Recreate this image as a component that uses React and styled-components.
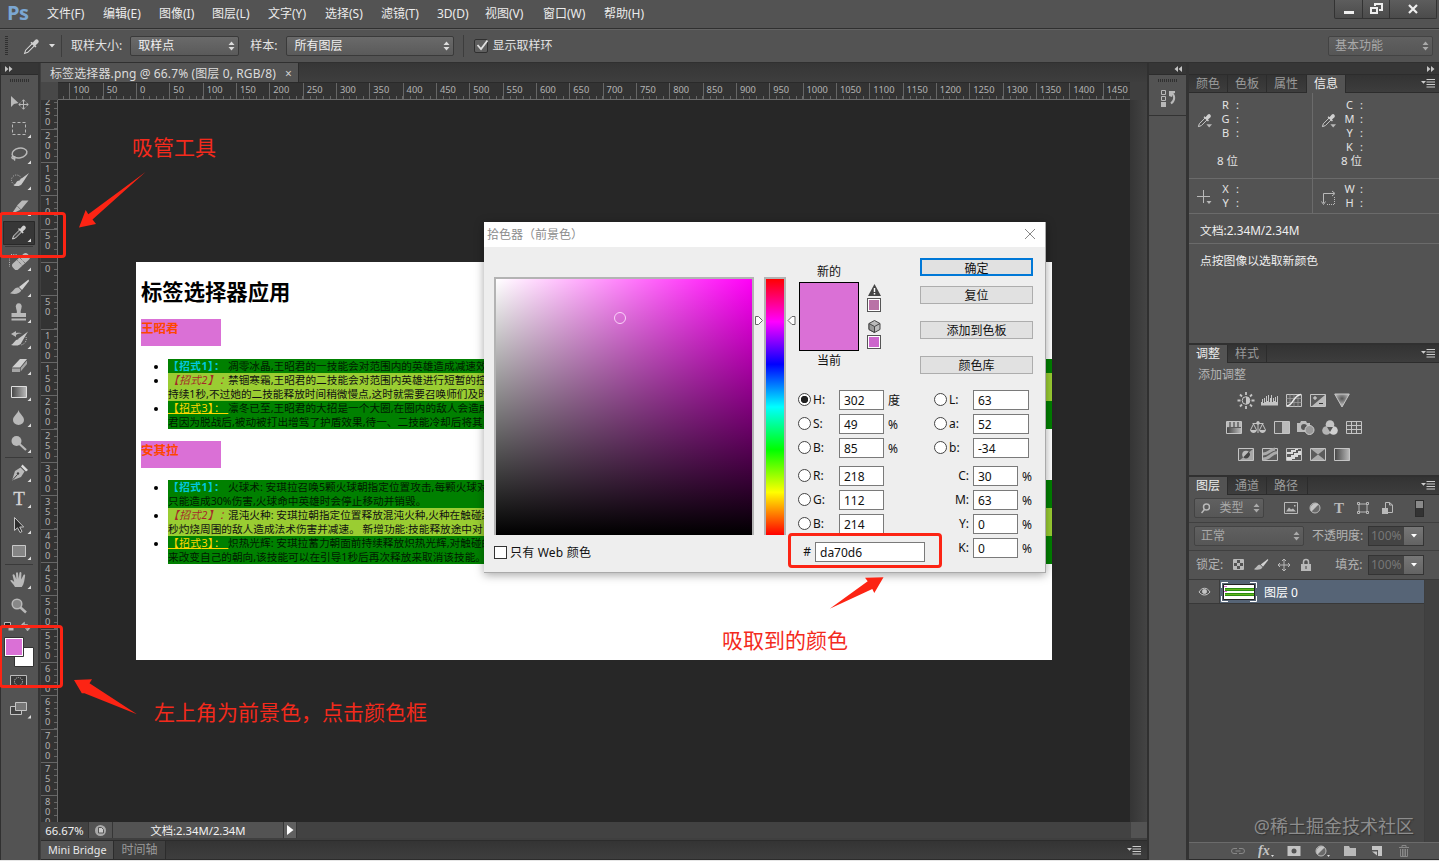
import React from "react";
import styled, { createGlobalStyle, css } from "styled-components";

const ui = `"Noto Sans", "Open Sans", "Noto Sans CJK SC", sans-serif`;
const icon = "#b9b9b9";

const GlobalStyle = createGlobalStyle`
  * { box-sizing: border-box; }
  body {
    margin: 0;
    background: #535353;
    overflow: hidden;
  }
  svg { display: block; flex: none; }
`;

const Window = styled.div`
  position: relative;
  display: flex;
  flex-direction: column;
  width: 1439px;
  height: 861px;
  overflow: hidden;
  background: #535353;
  border-bottom: 1px solid #e6e6e6;
  font-family: ${ui};
  font-size: 12px;
  color: #e3e3e3;
  white-space: nowrap;
`;

/* ---------- top bars ---------- */

const MenuBar = styled.header`
  display: flex;
  height: 29px;
  padding-left: 7px;
  border-bottom: 1px solid #303030;
`;

const Logo = styled.div`
  width: 40px;
  font: bold 20px/26px "Open Sans", sans-serif;
  letter-spacing: -0.5px;
  color: #7ba7d2;
`;

const MenuItem = styled.div`
  width: ${(p) => p.$w}px;
  line-height: 27px;
  color: #ececec;
`;

const WindowButtons = styled.div`
  display: flex;
  width: 103px;
  height: 19px;
  margin-left: auto;
  margin-right: 2px;
  border: 1px solid #333;
  border-top: 0;
  border-radius: 0 0 2px 2px;
  background: linear-gradient(#5d5d5d, #4b4b4b);
`;

const WindowButton = styled.div`
  display: flex;
  align-items: center;
  justify-content: center;
  width: ${(p) => p.$w}px;
  border-right: ${(p) => (p.$last ? 0 : "1px solid #333")};
`;

const OptionsBar = styled.div`
  display: flex;
  align-items: center;
  height: 34px;
  padding: 0 6px 0 5px;
  border-top: 1px solid #646464;
  border-bottom: 1px solid #303030;
`;

const Grip = styled.div`
  width: ${(p) => (p.$vertical ? 3 : 20)}px;
  height: ${(p) => (p.$vertical ? 20 : 3)}px;
  background: ${(p) =>
    p.$vertical
      ? "repeating-linear-gradient(#303030 0 1px, transparent 1px 2px)"
      : "repeating-linear-gradient(90deg, #303030 0 1px, transparent 1px 2px)"};
`;

const Rule = styled.div`
  width: 1px;
  height: 22px;
  background: #3d3d3d;
`;

const OptionLabel = styled.span`
  margin: 0 ${(p) => p.$right || 0}px 0 ${(p) => p.$left || 0}px;
  line-height: 18px;
`;

const Select = styled.div`
  display: flex;
  align-items: center;
  justify-content: space-between;
  width: ${(p) => p.$w}px;
  height: 20px;
  margin: ${(p) => p.$margin || 0};
  padding: 0 3px 1px 7px;
  border: 1px solid #3a3a3a;
  border-radius: 2px;
  background: linear-gradient(#6a6a6a, #5a5a5a);
  color: #f0f0f0;
  line-height: 16px;
  ${(p) =>
    p.$dim &&
    css`
      padding-left: 6px;
      border-color: #434343;
      background: linear-gradient(#606060, #565656);
      color: #a9a9a9;
    `}
`;

const CheckSquare = styled.div`
  width: 14px;
  height: 14px;
  border: 1px solid #303030;
  border-radius: 2px;
  background: #5f5f5f;
`;

/* ---------- main area ---------- */

const Main = styled.main`
  display: flex;
  flex: 1;
  min-height: 0;
`;

const ToolColumn = styled.aside`
  width: 40px;
  border-left: 1px solid #303030;
  border-right: 2px solid #343434;
`;

const CollapseBar = styled.div`
  display: flex;
  align-items: center;
  justify-content: ${(p) => p.$align || "flex-end"};
  height: 12px;
  padding: 0 4px;
  background: #363636;
  border-bottom: 1px solid #2c2c2c;
`;

const ToolGrip = styled.div`
  display: flex;
  justify-content: center;
  height: 15px;
  padding-top: 4px;
`;

const ToolSlot = styled.div`
  height: 26px;
`;

const ToolRule = styled.div`
  height: 3px;
  margin: 0 5px 0 4px;
  border-top: 1px solid #3a3a3a;
`;

const Workspace = styled.section`
  display: flex;
  flex-direction: column;
  width: 1109px;
  padding-left: 1px;
  border-right: 2px solid #303030;
  background: #3f3f3f;
`;

const FileTabs = styled.div`
  display: flex;
  height: 19px;
  background: linear-gradient(#363636, #3e3e3e);
`;

const FileTab = styled.div`
  display: flex;
  align-items: center;
  width: 258px;
  padding: 1px 6px 0 9px;
  background: #535353;
  color: #dcdcdc;
  letter-spacing: 0.12px;
  border-right: 1px solid #2c2c2c;

  span:last-child {
    margin-left: auto;
    color: #d0d0d0;
  }
`;

const RulerRow = styled.div`
  display: flex;
  height: 18px;
`;

const RulerCorner = styled.div`
  width: 17px;
  background: #484848;
`;

const HRuler = styled.div`
  display: flex;
  width: 1072px;
  overflow: hidden;
  background: #333;
  border-top: 1px solid #2a2a2a;
  border-bottom: 1px solid #6c6c6c;

  > :first-child {
    margin-left: -22px;
  }
`;

const HMark = styled.div`
  flex: none;
  width: 33.333px;
  padding-left: 3px;
  border-left: 1px solid #666;
  background: repeating-linear-gradient(90deg, transparent 0 5.667px, #666 5.667px 6.667px) left bottom / 100% 3px no-repeat;
  font-size: 9.3px;
  line-height: 14px;
  color: #b4b4b4;
`;

const VRuler = styled.div`
  width: 17px;
  overflow: hidden;
  background: #333;
  border-right: 1px solid #6c6c6c;

  > :first-child {
    margin-top: -4.7px;
  }
`;

const VMark = styled.div`
  height: 33.333px;
  padding: 1px 0 0 4px;
  border-top: 1px solid #666;
  background: repeating-linear-gradient(transparent 0 5.667px, #666 5.667px 6.667px) right top / 3px 100% no-repeat;
  font-size: 9.3px;
  line-height: 10px;
  color: #b4b4b4;

  span {
    display: block;
  }
`;

const CanvasRow = styled.div`
  display: flex;
  height: 722px;
`;

const Canvas = styled.div`
  width: 1072px;
  padding: 162px 0 0 78px;
  background: #272727;
`;

const ScrollTrack = styled.div`
  flex: 1;
  background: linear-gradient(90deg, #353535, #444);
`;

const StatusBar = styled.div`
  display: flex;
  align-items: center;
  height: 16px;
  background: #424242;
  color: #f1f1f1;
`;

const StatusCell = styled.div`
  display: flex;
  align-items: center;
  justify-content: center;
  width: ${(p) => p.$w}px;
  height: 16px;
  background: ${(p) => p.$bg || "#535353"};
  border-right: 1px solid #363636;
  font-size: 11.3px;
`;

const StatusEnd = styled.div`
  width: 16px;
  height: 16px;
  margin-left: auto;
  background: #535353;
`;

const DrawerBar = styled.div`
  display: flex;
  align-items: center;
  height: 20px;
  margin-top: 2px;
  padding-right: 6px;
  border-top: 1px solid #2c2c2c;
  border-bottom: 1px solid #2c2c2c;
  background: linear-gradient(#343434, #3e3e3e);
`;

const DrawerTab = styled.div`
  height: 18px;
  padding: 0 7px;
  line-height: 18px;
  font-size: ${(p) => (p.$active ? 10.8 : 12)}px;
  background: ${(p) => (p.$active ? "#535353" : "#404040")};
  color: ${(p) => (p.$active ? "#e8e8e8" : "#999")};
  border-right: 1px solid #2c2c2c;
`;

const Spacer = styled.div`
  flex: 1;
`;

/* ---------- open document ---------- */

const Page = styled.article`
  width: 916px;
  height: 398px;
  padding: 14px 0 0 5px;
  background: #fff;
  color: #000;
  font-size: 10.667px;
  overflow: hidden;

  h1 {
    margin: 0;
    font-size: 21.333px;
    line-height: 32px;
  }
`;

const HeroName = styled.h3`
  width: 80px;
  height: 27px;
  margin: ${(p) => p.$top}px 0 0;
  background: #da70d6;
  color: #ff4500;
  font-size: 12.48px;
  line-height: 20px;
`;

const SkillList = styled.ul`
  margin: ${(p) => p.$top}px 0 0;
  padding-left: 27px;
`;

const Skill = styled.li`
  background: ${(p) => (p.$light ? "#9acd32" : "#008000")};
  color: ${(p) => (p.$light ? "#111" : "#001c00")};
  line-height: 14px;

  &::marker {
    color: #000;
  }
  div {
    height: 14px;
  }
`;

const Move = styled.span`
  display: inline-block;
  width: 60px;
  height: 14px;
  letter-spacing: 0.5px;
  ${(p) => p.$kind === 1 && "color: #00c8dc; font-weight: bold;"}
  ${(p) => p.$kind === 2 && "color: #a52a2a; font-style: italic;"}
  ${(p) => p.$kind === 3 && "color: #ffd700; text-decoration: underline;"}
`;

/* ---------- panels ---------- */

const IconStrip = styled.aside`
  width: 40px;
  border-right: 3px solid #333;
`;

const StripButton = styled.div`
  display: flex;
  flex-direction: column;
  align-items: center;
  gap: 7px;
  height: 41px;
  padding-top: 4px;
  border-bottom: 1px solid #333;
`;

const Panels = styled.aside`
  display: flex;
  flex-direction: column;
  width: 250px;
`;

const PanelTabs = styled.div`
  display: flex;
  align-items: center;
  height: 18px;
  padding-right: 4px;
  background: linear-gradient(#333, #3d3d3d);
  border-bottom: 1px solid #2c2c2c;
`;

const PanelTab = styled.div`
  width: ${(p) => p.$w || 39}px;
  height: 18px;
  padding-left: 7px;
  border-right: 1px solid #2c2c2c;
  line-height: 18px;
  background: ${(p) => (p.$active ? "#535353" : "transparent")};
  color: ${(p) => (p.$active ? "#eee" : "#9b9b9b")};
`;

const InfoGrid = styled.div`
  display: grid;
  grid-template-columns: 124px 1fr;
  height: ${(p) => p.$h}px;
  border-bottom: 1px solid #6b6b6b;
`;

const InfoCell = styled.div`
  display: flex;
  padding: ${(p) => p.$top}px 0 0 8px;
  border-right: ${(p) => (p.$last ? 0 : "1px solid #6b6b6b")};
`;

const InfoIcon = styled.div`
  width: 23px;
  padding-top: ${(p) => p.$top}px;
`;

const InfoLines = styled.div`
  font-size: 11px;
  line-height: 14px;

  div {
    display: flex;
    height: 14px;
  }
  b {
    width: 11px;
    margin-right: 5px;
    text-align: center;
    font-weight: normal;
  }
  p {
    margin: 0 0 0 -3px;
    font-size: 11.5px;
  }
`;

const InfoNote = styled.div`
  height: ${(p) => p.$h}px;
  padding-left: 11px;
  line-height: 33px;
  border-bottom: ${(p) => (p.$line ? "1px solid #6b6b6b" : 0)};
  color: #f0f0f0;
  font-size: 11.8px;
`;

const PanelGap = styled.div`
  height: 2px;
  background: #303030;
`;

const Adjustments = styled.div`
  height: 112px;
  padding: 3px 0 0 9px;
  line-height: 17px;
  color: #b4b4b4;
`;

const AdjustRow = styled.div`
  display: flex;
  justify-content: center;
  gap: 8px;
  margin: ${(p) => p.$top || 11}px 49px 0 0;
`;

const LayerRow = styled.div`
  display: flex;
  align-items: center;
  height: ${(p) => p.$h}px;
  padding: 0 0 1px 5px;
  border-bottom: 1px solid ${(p) => p.$line || "#404040"};
  color: #b4b4b4;
`;

const IconGroup = styled.div`
  display: flex;
  align-items: center;
  gap: ${(p) => p.$gap}px;
  margin-left: ${(p) => p.$left}px;
`;

const FilterSwitch = styled.div`
  width: 9px;
  height: 17px;
  margin-left: 21px;
  border: 1px solid #2c2c2c;
  background: linear-gradient(#8a8a8a 0 50%, #333 50%);
`;

const Percent = styled.div`
  display: flex;
  width: 56px;
  height: 20px;
  margin-left: auto;
  margin-right: 15px;
  border: 1px solid #343434;
  color: #777;
  line-height: 18px;

  span {
    flex: 1;
    padding-left: 2px;
    background: #444;
  }
  div {
    display: flex;
    align-items: center;
    justify-content: center;
    width: 19px;
    background: linear-gradient(#777, #636363);
  }
`;

const Layers = styled.div`
  display: flex;
  flex: 1;
  background: #474747;
`;

const LayerList = styled.div`
  flex: 1;
  border-right: 1px solid #3e3e3e;
`;

const LayerItem = styled.div`
  display: flex;
  align-items: center;
  height: 24px;
  background: #566476;
  border-bottom: 1px solid #383838;
  color: #fff;
`;

const EyeCell = styled.div`
  display: flex;
  align-items: center;
  justify-content: center;
  width: 31px;
  height: 23px;
  background: #535353;
  border-right: 1px solid #3c3c3c;
`;

const LayerScroll = styled.div`
  width: 14px;
  background: #414141;
`;

const LayerFooter = styled.div`
  display: flex;
  align-items: center;
  justify-content: flex-end;
  gap: 13px;
  height: 18px;
  padding-right: 28px;
  border-top: 1px solid #6b6b6b;
  border-bottom: 1px solid #2c2c2c;
`;

/* ---------- color picker ---------- */

const Dialog = styled.div`
  position: absolute;
  left: 484px;
  top: 222px;
  width: 562px;
  height: 351px;
  background: #eee;
  border-right: 1px solid #aaa;
  border-bottom: 1px solid #aaa;
  box-shadow: 0 2px 9px rgba(0, 0, 0, 0.35);
  color: #111;
`;

const DialogTitle = styled.div`
  display: flex;
  align-items: center;
  justify-content: space-between;
  height: 25px;
  padding: 0 9px 2px 3px;
  background: #fff;
  color: #8d8d8d;
`;

const DialogBody = styled.div`
  display: flex;
  height: 325px;
  padding-left: 10px;
`;

const FieldColumn = styled.div`
  width: 261px;
  padding-top: 30px;
`;

const ColorField = styled.div`
  position: relative;
  width: 260px;
  height: 258px;
  border: 2px solid #b3b3b3;
  border-bottom: 0;
  background: linear-gradient(transparent, #000), linear-gradient(90deg, #fff, #ff00f7);
`;

const FieldCursor = styled.div`
  position: absolute;
  left: 118px;
  top: 33px;
  width: 12px;
  height: 12px;
  border: 1px solid #fbd3fa;
  border-radius: 50%;
`;

const WebOnly = styled.label`
  display: flex;
  align-items: center;
  gap: 3px;
  height: 18px;
  margin-top: 8px;
  letter-spacing: 0.2px;

  i {
    width: 13px;
    height: 13px;
    border: 1px solid #333;
    background: #fff;
  }
`;

const HueColumn = styled.div`
  display: flex;
  align-items: flex-start;
  width: 43px;
  padding-top: 30px;

  svg {
    margin-top: 38px;
  }
`;

const HueBar = styled.div`
  width: 22px;
  height: 258px;
  margin: 0 1px;
  border: 2px solid #b3b3b3;
  border-bottom: 0;
  background: linear-gradient(#f00, #f0f 16.7%, #00f 33.3%, #0ff 50%, #0f0 66.7%, #ff0 83.3%, #f00);
`;

const Values = styled.div`
  width: 237px;
`;

const ValuesTop = styled.div`
  display: flex;
  height: 143px;
`;

const Preview = styled.div`
  width: 61px;
  padding: 16px 0 0 1px;
  line-height: 18px;
  text-align: center;

  div {
    height: 69px;
    margin: 1px 0;
    border: 1px solid #000;
    background: #da70d6;
  }
`;

const Warnings = styled.div`
  display: flex;
  flex-direction: column;
  align-items: center;
  gap: 3px;
  width: 16px;
  margin: 37px 0 0 7px;
`;

const SmallSwatch = styled.div`
  width: 14px;
  height: 14px;
  margin-top: -1px;
  margin-bottom: ${(p) => p.$gap || 0}px;
  border: 1px solid #555;
  background: ${(p) => p.$color};
  box-shadow: inset 0 0 0 1px #fff;
`;

const Buttons = styled.div`
  width: 113px;
  margin-left: 38px;
  padding-top: 11px;
`;

const DialogButton = styled.div`
  height: 18px;
  margin-bottom: ${(p) => p.$gap || 17}px;
  border: ${(p) => (p.$primary ? "2px solid #0078d7" : "1px solid #adadad")};
  background: #e1e1e1;
  line-height: ${(p) => (p.$primary ? 17 : 18)}px;
  text-align: center;
`;

const ValueColumns = styled.div`
  display: flex;
  justify-content: space-between;
`;

const ValueColumn = styled.div`
  width: ${(p) => p.$w}px;
`;

const ValueRow = styled.div`
  display: flex;
  align-items: center;
  height: 20px;
  margin-bottom: ${(p) => (p.$gap ? 8 : 4)}px;
`;

const Radio = styled.i`
  width: 13px;
  height: 13px;
  margin-bottom: 1px;
  border: 1px solid #444;
  border-radius: 50%;
  background: ${(p) => (p.$on ? "radial-gradient(#222 0 3.4px, #fff 4px)" : "#fff")};
`;

const ValueLabel = styled.span`
  flex: none;
  width: ${(p) => p.$w}px;
  padding: ${(p) => (p.$right ? "0 4px 1px 0" : "0 0 1px 2px")};
  text-align: ${(p) => (p.$right ? "right" : "left")};
`;

const ValueInput = styled.div`
  flex: none;
  width: ${(p) => p.$w || 45}px;
  height: 20px;
  margin-right: 4px;
  padding-left: 4px;
  border: 1px solid #7a7a7a;
  background: #fff;
  line-height: 19px;
`;

/* ---------- red markup ---------- */

const Markup = styled.div`
  position: absolute;
  left: ${(p) => p.$x}px;
  top: ${(p) => p.$y}px;
  width: ${(p) => p.$w}px;
  height: ${(p) => p.$h}px;
  border: 3px solid #fc2414;
  border-radius: 4px;
`;

const Note = styled.div`
  position: absolute;
  left: ${(p) => p.$x}px;
  top: ${(p) => p.$y}px;
  font-size: 21px;
  line-height: 30px;
  color: #f32a1c;
`;

const Arrows = styled.svg`
  position: absolute;
  left: 0;
  top: 0;
  fill: #fc2414;
  pointer-events: none;
`;

const Watermark = styled.div`
  position: absolute;
  right: 25px;
  bottom: 21px;
  font-size: 18px;
  line-height: 26px;
  color: #8d8d8d;
  text-shadow: 1px 1px 1px #333;
`;

/* ---------- icons ---------- */

const UpDown = ({ color = "#ddd" }) => (
  <svg width="7" height="10" viewBox="0 0 7 10" fill={color}>
    <path d="M0.5 4 3.5 0.5 6.5 4zM0.5 6 3.5 9.5 6.5 6z" />
  </svg>
);

const Chevrons = ({ left }) => (
  <svg width="8" height="6" viewBox="0 0 8 6" fill="#c4c4c4">
    <path d={left ? "M4 0v6L0.5 3zM8 0v6L4.5 3z" : "M0 0v6l3.5-3zM4 0v6l3.5-3z"} />
  </svg>
);

const PanelMenu = () => (
  <svg width="14" height="9" viewBox="0 0 14 9">
    <path d="M0 2h5L2.5 4.8z" fill="#ccc" />
    <path d="M5.5 .5h8.5M5.5 3h8.5M5.5 5.500h8.500M5.500 8h8.500" stroke="#ccc" />
  </svg>
);

const dropperShape = (
  <>
    <path d="M1.5 14.5 2.5 11.5 9 5l2 2-6.5 6.5z" fill="#4a4a4a" stroke="#d5d5d5" />
    <path d="M7 4.5 8 3.5l1 .9L11.6 1.6a2 2 0 0 1 2.8 2.8L11.7 7l1 1-1 1z" fill="#d0d0d0" />
  </>
);

const Dropper = ({ size = 16, menu }) => (
  <svg width={size} height={size} viewBox="0 0 16 16">
    {dropperShape}
    {menu && <path d="M10 12h6l-3 3.4z" fill={icon} />}
  </svg>
);

const brushShape = (
  <>
    <path d="M28.5 4.5 19 12l3 3L29 6z" fill="#d2d2d2" />
    <path d="M18.5 12.5c-3.5-.7-4 2.5-8.5 5.7 4 1.4 9.5 1 11.3-2.6z" fill={icon} />
  </>
);

const tools = {
  move: (
    <>
      <path d="M11 6v11l3-3 4.5-1z" fill={icon} />
      <path d="M23.5 10v9M19 14.5h9M22 11.5l1.5-1.8 1.5 1.8M22 17.5l1.5 1.8 1.5-1.8M20.5 13l-1.8 1.5 1.8 1.5M26.5 13l1.8 1.5-1.8 1.5" fill="none" stroke={icon} />
    </>
  ),
  marquee: <path d="M12.5 6.5h13v12h-13z" fill="none" stroke={icon} strokeDasharray="3 2" />,
  lasso: (
    <g fill="none" stroke={icon} strokeWidth="1.5">
      <ellipse cx="19.5" cy="11" rx="7.5" ry="4.8" transform="rotate(-12 19.5 11)" />
      <path d="M13 14c-3 2 1 3.5 2 2s-3-2.500 0 2.500" />
    </g>
  ),
  quick: (
    <>
      <circle cx="16.5" cy="12" r="5" fill="none" stroke={icon} strokeDasharray="1 1.4" />
      <path d="M29 5 19.5 12l3 3zM20 12.500c-3.500-.500-3.500 3-6.500 5 3.500 1 8 .8 9-2.800z" fill="#c8c8c8" />
    </>
  ),
  slice: <path d="M28.5 6.500h-6.500l-5 5 4 4zM17 12l-5.500 8 9-4.300z" fill={icon} />,
  dropper: (
    <>
      <path d="M3.5 1.5h31v23h-31z" fill="#373737" stroke="#292929" />
      <g transform="translate(11 4.5)">{dropperShape}</g>
    </>
  ),
  heal: (
    <>
      <path d="M9.5 6v12M11 5.5h6" fill="none" stroke={icon} strokeDasharray="1 1.3" />
      <rect x="11" y="8.5" width="20" height="8" rx="3" transform="rotate(-42 21 12.5)" fill={icon} />
      <path d="m17.5 11.500 4.800 5M20 9l5 5" stroke="#606060" strokeDasharray="1 1" />
    </>
  ),
  brush: brushShape,
  stamp: (
    <path d="M16 6.5a3 3 0 1 1 5.5 0c0 1.7-1.2 3-.8 5.5H26v4H11.5v-4h5.3c.5-2.5-.8-4-.8-5.5zM11.5 17.5H26v2H11.5z" fill={icon} />
  ),
  history: (
    <>
      <path d="m11 7 5-3v2c3-.4 5 0 6 .6-2-.2-4 .1-6 1.4v2z" fill={icon} />
      <path d="M28 4.5 18 12l3.500 3.500zM18.500 12.500c-3.500-.500-3.500 3-7.500 5.500 5 1.200 9.500.7 10.500-2.500z" fill="#c8c8c8" />
      <path d="M26 10c1 3-.5 7-5 8" fill="none" stroke={icon} strokeDasharray="1 1" />
    </>
  ),
  eraser: (
    <>
      <path d="m12 14.5 8-8.5h7l-7 8.5z" fill="#d0d0d0" />
      <path d="M12 15.5h8V19h-8zM20.7 15 27 7.5V11l-6.3 7.5z" fill="#a5a5a5" />
    </>
  ),
  gradient: <path d="M11.5 7.5h15v11h-15z" fill="url(#toolGrad)" stroke="#ddd" />,
  blur: <path d="M18.5 5c1 4 5.5 6 5.5 10a5.5 5 0 0 1-11 0c0-4 4.7-6 5.5-10z" fill={icon} />,
  dodge: (
    <>
      <circle cx="16.5" cy="10" r="5" fill={icon} />
      <path d="m19.5 13 6.5 6" stroke={icon} strokeWidth="2.2" />
    </>
  ),
  pen: (
    <>
      <path d="M12 20.5 15 11l5.5-3.5 4 4L21 17z" fill={icon} />
      <path d="m21 6.5 1.5-2 5.5 5.5-2 1.5z" fill="#ddd" />
      <path d="m12.5 20 5-5.5" stroke="#444" />
      <circle cx="18" cy="13.5" r="1.2" fill="#444" />
    </>
  ),
  type: (
    <text x="19" y="19" textAnchor="middle" fontFamily="Liberation Serif, serif" fontSize="19" fill="#d6d6d6" stroke="#d6d6d6" strokeWidth=".3">T</text>
  ),
  path: <path d="M14.5 5.5v13l3-2.7 2.5 4.7 2-1-2.3-4.5h4z" fill="#2c2c2c" stroke="#c4c4c4" />,
  rect: <path d="M12.5 7.5h13v11h-13z" fill="#858585" stroke="#c8c8c8" />,
  hand: (
    <path d="M15 20c-1.5-3-3.5-4.5-4.8-6.5.8-1.2 2.3-.5 4 1.5L12.5 8c.7-1.4 1.8-.8 2.2.2l1.6 4L16 6c.7-1.2 1.8-1 2 .2l.7 5.5.8-6.2c.7-1 1.8-.7 1.9.5l-.2 6.5L23.5 8c.9-.8 1.8-.3 1.6.8-.6 3.5-.8 8.2-3.3 11.2z" fill={icon} />
  ),
  zoom: (
    <>
      <circle cx="17" cy="11" r="4.8" fill="#888" stroke={icon} strokeWidth="1.5" />
      <path d="m20.5 14.5 5.500 5" stroke={icon} strokeWidth="2.5" />
    </>
  ),
};

const toolOrder = [
  "move", "marquee", "lasso", "quick", "slice", "dropper", "-", "heal", "brush", "stamp",
  "history", "eraser", "gradient", "blur", "dodge", "-", "pen", "type", "path", "rect", "-", "hand", "zoom",
];

// viewBox starts at 1 because the toolbar has a one pixel left border
const Tool = ({ name }) => (
  <ToolSlot>
    <svg width="37" height="26" viewBox="1 0 37 26">
      {tools[name]}
      {name !== "move" && name !== "zoom" && <path d="M31 18.5V22h-3.5z" fill="#ddd" />}
    </svg>
  </ToolSlot>
);

const ToolColors = () => (
  <svg width="37" height="108" viewBox="1 619 37 108">
    <path d="M4.5 622.5h6v5h-6z" fill="#222" stroke={icon} />
    <path d="M8.5 626.5h5v4h-5z" fill={icon} />
    <path d="M23 624.5h4.500v5M24.500 622l-3 2.500 3 2.500zM25 627.500l2.500 3.500 3-3.500z" fill={icon} stroke={icon} strokeWidth=".5" />
    <path d="M14.5 647.5h19v19h-19z" fill="#fff" stroke="#333" />
    <path d="M4.5 637.5h19v19h-19z" fill="#fff" stroke="#333" />
    <path d="M6 639h16v16H6z" fill="#da70d6" />
    <path d="M10.5 675.5h16v12h-16z" fill="#383838" stroke="#bbb" />
    <circle cx="18.5" cy="681.5" r="4" fill="none" stroke="#ccc" strokeDasharray="1 1" />
    <path d="M10.5 706.5h11v8h-11z" fill="#444" stroke="#c4c4c4" />
    <path d="M15.5 702.5h11v8h-11z" fill="#777" stroke="#c4c4c4" />
    <path d="M31 715v3.5h-3.5z" fill="#ddd" />
  </svg>
);

const box = <path d="M.5 1.5h15v12H.5z" fill="#5b5b5b" stroke="#c4c4c4" />;

const adjustIcons = {
  sun: (
    <>
      <circle cx="8" cy="7.5" r="3.8" fill="#555" stroke="#c4c4c4" />
      <path d="M8 3.7a3.8 3.8 0 0 1 0 7.600z" fill="#c4c4c4" />
      <path d="M8-1v3M8 13v3M-.5 7.500h3M13.500 7.500h3M2 1.500l2 2M12 11.500l2 2M14 1.500l-2 2M2 13.500l2-2" stroke="#c4c4c4" strokeWidth="1.8" />
    </>
  ),
  levels: (
    <path d="M-1 12.5V9h1V6h1v4h1V5h1v4h1V3h1v5h1V2h1v7h1V5h1V2h1v7h1V5h1v3h1V4h1v5h1V3h1v9.5z" fill="#c4c4c4" />
  ),
  curves: (
    <>
      {box}
      <path d="M4 1.5v12M8 1.5v12M12 1.5v12M.5 5.5h15M.5 9.5h15" stroke="#999" strokeWidth=".8" />
      <path d="M1 13c7-1 6-11 14-11.5" fill="none" stroke="#eee" strokeWidth="1.4" />
    </>
  ),
  exposure: (
    <>
      {box}
      <path d="M15 2v11H2z" fill="#bbb" />
      <path d="M3 5h4M5 3v4" stroke="#ddd" />
      <path d="M9 10.5h4" stroke="#333" />
    </>
  ),
  vibrance: <path d="M.7 1h14.600L8 14z" fill="url(#vibrance)" stroke="#c4c4c4" />,
  hue: (
    <>
      {box}
      <path d="M1 2h14v5H1z" fill="#bbb" />
      <path d="M4 2v5M8 2v5M12 2v5" stroke="#777" strokeWidth="2" />
      <path d="M1 8h14v5H1z" fill="url(#toolGrad)" />
    </>
  ),
  balance: (
    <>
      <path d="M8 1v12M2.500 3.500h11M3.500 4 .5 10M3.500 4l3 6M12.500 4l-3 6M12.500 4l3 6" fill="none" stroke="#c4c4c4" />
      <path d="M0 10h7c-1 4-6 4-7 0zM9 10h7c-1 4-6 4-7 0z" fill="#c4c4c4" />
      <circle cx="8" cy="3" r="1.8" fill="#c4c4c4" />
    </>
  ),
  bw: (
    <>
      {box}
      <path d="M8 2h7v11H8z" fill="#bbb" />
    </>
  ),
  photo: (
    <>
      <path d="M-1 3h3l1-2h5l1 2h3v9H-1z" fill="#bbb" />
      <circle cx="6" cy="7" r="3" fill="#555" />
      <circle cx="11.5" cy="10" r="4.5" fill="#999" stroke="#ccc" />
    </>
  ),
  mixer: (
    <>
      <circle cx="8" cy="4.5" r="4.3" fill="#c4c4c4" />
      <circle cx="4.5" cy="10.5" r="4.3" fill="#b4b4b4" />
      <circle cx="11.5" cy="10.5" r="4.3" fill="#d0d0d0" />
      <path d="M5 7h6l-3 5z" fill="#555" />
    </>
  ),
  lookup: (
    <>
      {box}
      <path d="M5.5 1.5v12M10.5 1.5v12M.5 5.5h15M.5 9.5h15" stroke="#c4c4c4" />
    </>
  ),
  invert: (
    <>
      {box}
      <path d="M15 2v11H2z" fill="#a8a8a8" />
      <circle cx="8" cy="7.5" r="3.8" fill="#bbb" />
      <path d="M10.7 4.8a3.8 3.8 0 0 1-5.4 5.4z" fill="#444" />
    </>
  ),
  posterize: (
    <>
      {box}
      <path d="M1 7c6 0 6-4 12-5M1 12c7 0 8-6 14-6.500" fill="none" stroke="#aaa" strokeWidth="3" />
    </>
  ),
  threshold: (
    <>
      {box}
      <path d="M1 13v-3h4V8h3V6h4V4h3v4h-3v2H9v2H6v1zM1 7V5h4V3h4V2h3v1h-2v2H7v2z" fill="#ddd" />
    </>
  ),
  selective: (
    <>
      {box}
      <path d="m1 2 7 5.500L15 2zM1 13l7-5.500 7 5.500z" fill="#aaa" />
    </>
  ),
  map: <path d="M.5 1.5h15v12H.5z" fill="url(#toolGrad)" stroke="#c4c4c4" />,
};

const AdjustIcon = ({ name }) => (
  <svg width="16" height="16" viewBox="0 0 16 16" overflow="visible">
    {adjustIcons[name]}
  </svg>
);

const SmallIcon = ({ w = 14, children }) => (
  <svg width={w} height="14" viewBox={`0 0 ${w} 14`} fill="none" stroke="#b9b9b9">
    {children}
  </svg>
);

const HalfCircle = () => (
  <>
    <circle cx="7" cy="7" r="5" fill="#6a6a6a" />
    <path d="M3.5 10.5 10.5 3.5A5 5 0 0 0 3.5 10.5z" fill="#c4c4c4" stroke="none" />
  </>
);

/* ---------- data ---------- */

const menus = [
  ["文件(F)", 56], ["编辑(E)", 56], ["图像(I)", 53], ["图层(L)", 56], ["文字(Y)", 57],
  ["选择(S)", 56], ["滤镜(T)", 56], ["3D(D)", 48], ["视图(V)", 58], ["窗口(W)", 61], ["帮助(H)", 60],
];

const hMarks = ["", ...Array.from({ length: 32 }, (_, i) => Math.abs(i * 50 - 100))];
const vMarks = Array.from({ length: 22 }, (_, i) => Math.abs(i * 50 - 250));

const heroes = [
  {
    name: "王昭君",
    skills: [
      ["凋零冰晶,王昭君的一技能会对范围内的英雄造成减速效果"],
      ["禁锢寒霜,王昭君的二技能会对范围内英雄进行短暂的控制", "持续1秒,不过她的二技能释放时间稍微慢点,这时就需要召唤师们及时"],
      ["凛冬已至,王昭君的大招是一个大圈,在圈内的敌人会造成", "君因为脱战后,被动被打出增驾了护盾效果,待一、二技能冷却后将其"],
    ],
  },
  {
    name: "安其拉",
    skills: [
      ["火球术: 安琪拉召唤5颗火球朝指定位置攻击,每颗火球对", "只能造成30%伤害,火球命中英雄时会停止移动并销毁。"],
      ["混沌火种: 安琪拉朝指定位置释放混沌火种,火种在触碰敌", "秒灼烧周围的敌人造成法术伤害并减速。 新增功能:技能释放途中对"],
      ["炽热光辉: 安琪拉蓄力朝面前持续释放炽热光辉,对触碰的", "来改变自己的朝向,该技能可以在引导1秒后再次释放来取消该技能。"],
    ],
  },
];

/* ---------- sections ---------- */

const TopBars = () => (
  <>
    <MenuBar>
      <Logo>Ps</Logo>
      {menus.map(([text, w]) => (
        <MenuItem key={text} $w={w}>{text}</MenuItem>
      ))}
      <WindowButtons>
        <WindowButton $w={28}>
          <svg width="12" height="12"><path d="M1 8h10v3H1z" fill="#eee" /></svg>
        </WindowButton>
        <WindowButton $w={27}>
          <svg width="13" height="12" fill="none" stroke="#eee" strokeWidth="2">
            <path d="M5 3V1h7v6H9M1 5h6v5H1z" />
          </svg>
        </WindowButton>
        <WindowButton $w={46} $last>
          <svg width="12" height="10"><path d="m2 1 8 8M10 1 2 9" stroke="#eee" strokeWidth="2.2" /></svg>
        </WindowButton>
      </WindowButtons>
    </MenuBar>
    <OptionsBar>
      <Grip $vertical />
      <OptionLabel $left={15} $right={9}><Dropper size={17} /></OptionLabel>
      <svg width="6" height="4"><path d="M0 0h6L3 3.5z" fill="#ddd" /></svg>
      <OptionLabel $left={6} $right={9}><Rule /></OptionLabel>
      <OptionLabel>取样大小:</OptionLabel>
      <Select $w={109} $margin="0 11px 0 8px">取样点<UpDown /></Select>
      <OptionLabel>样本:</OptionLabel>
      <Select $w={168} $margin="0 9px 0 9px">所有图层<UpDown /></Select>
      <Rule />
      <OptionLabel $left={10} $right={4}>
        <CheckSquare>
          <svg width="14" height="13"><path d="m2.5 5 3.5 4 6.5-8.5" fill="none" stroke="#e0e0e0" strokeWidth="1.8" /></svg>
        </CheckSquare>
      </OptionLabel>
      <OptionLabel>显示取样环</OptionLabel>
      <Spacer />
      <Select $w={105} $dim>基本功能<UpDown color="#aaa" /></Select>
    </OptionsBar>
  </>
);

const Toolbar = () => (
  <ToolColumn>
    <CollapseBar $align="flex-start"><Chevrons /></CollapseBar>
    <ToolGrip><Grip /></ToolGrip>
    {toolOrder.map((name, i) => (name === "-" ? <ToolRule key={i} /> : <Tool key={i} name={name} />))}
    <ToolColors />
  </ToolColumn>
);

const OpenDocument = () => (
  <Page>
    <h1>标签选择器应用</h1>
    {heroes.map((hero, h) => (
      <React.Fragment key={hero.name}>
        <HeroName $top={h ? 12 : 11}>{hero.name}</HeroName>
        <SkillList $top={h ? 12 : 13}>
          {hero.skills.map(([first, second], i) => (
            <Skill key={i} $light={i === 1}>
              <div><Move $kind={i + 1}>【招式{i + 1}】：&nbsp;</Move>{first}</div>
              {second && <div>{second}</div>}
            </Skill>
          ))}
        </SkillList>
      </React.Fragment>
    ))}
  </Page>
);

const Center = () => (
  <Workspace>
    <FileTabs>
      <FileTab><span>标签选择器.png @ 66.7% (图层 0, RGB/8)</span><span>×</span></FileTab>
    </FileTabs>
    <RulerRow>
      <RulerCorner />
      <HRuler>{hMarks.map((n, i) => <HMark key={i}>{n}</HMark>)}</HRuler>
    </RulerRow>
    <CanvasRow>
      <VRuler>
        {vMarks.map((n, i) => (
          <VMark key={i}>{String(n).split("").map((d, j) => <span key={j}>{d}</span>)}</VMark>
        ))}
      </VRuler>
      <Canvas><OpenDocument /></Canvas>
      <ScrollTrack />
    </CanvasRow>
    <StatusBar>
      <StatusCell $w={48} $bg="#424242">66.67%</StatusCell>
      <StatusCell $w={24}>
        <svg width="13" height="13">
          <circle cx="6.5" cy="6.5" r="5.5" fill="#aaa" />
          <path d="M4.500 3.500h3l2 2v3.500h-5z" fill="#ccc" stroke="#555" />
        </svg>
      </StatusCell>
      <StatusCell $w={171}>文档:2.34M/2.34M</StatusCell>
      <StatusCell $w={13} $bg="#606060">
        <svg width="7" height="10"><path d="M0 0v10l6.5-5z" fill="#fff" /></svg>
      </StatusCell>
      <StatusEnd />
    </StatusBar>
    <DrawerBar>
      <DrawerTab $active>Mini Bridge</DrawerTab>
      <DrawerTab>时间轴</DrawerTab>
      <Spacer />
      <PanelMenu />
    </DrawerBar>
  </Workspace>
);

const Channels = ({ names, bits }) => (
  <InfoLines>
    {names.map((n, i) => <div key={i}><b>{n}</b>{n && ":"}</div>)}
    {bits && <p>8 位</p>}
  </InfoLines>
);

const InfoPanel = () => (
  <>
    <PanelTabs>
      <PanelTab>颜色</PanelTab>
      <PanelTab>色板</PanelTab>
      <PanelTab $w={40}>属性</PanelTab>
      <PanelTab $active>信息</PanelTab>
      <Spacer />
      <PanelMenu />
    </PanelTabs>
    <InfoGrid $h={86}>
      <InfoCell $top={5}>
        <InfoIcon $top={15}><Dropper size={15} menu /></InfoIcon>
        <Channels names={["R", "G", "B", ""]} bits />
      </InfoCell>
      <InfoCell $top={5} $last>
        <InfoIcon $top={15}><Dropper size={15} menu /></InfoIcon>
        <Channels names={["C", "M", "Y", "K"]} bits />
      </InfoCell>
    </InfoGrid>
    <InfoGrid $h={35}>
      <InfoCell $top={3}>
        <InfoIcon $top={8}>
          <svg width="15" height="15" stroke={icon}>
            <path d="M6.5 0v13M0 6.5h13" />
            <path d="M9.5 11h5L12 14z" fill={icon} stroke="none" />
          </svg>
        </InfoIcon>
        <Channels names={["X", "Y"]} />
      </InfoCell>
      <InfoCell $top={3} $last>
        <InfoIcon $top={8}>
          <svg width="15" height="16" fill="none" stroke={icon}>
            <path d="M2.5 13V3.5H13M11 1l3 2.5-3 2.5M.5 11.5l2 3 2-3" />
            <path d="M6 14.5h7.5V7" strokeDasharray="1 1" />
          </svg>
        </InfoIcon>
        <Channels names={["W", "H"]} />
      </InfoCell>
    </InfoGrid>
    <InfoNote $h={30} $line>文档:2.34M/2.34M</InfoNote>
    <InfoNote $h={99}>点按图像以选取新颜色</InfoNote>
  </>
);

const AdjustPanel = () => (
  <>
    <PanelTabs>
      <PanelTab $active>调整</PanelTab>
      <PanelTab>样式</PanelTab>
      <Spacer />
      <PanelMenu />
    </PanelTabs>
    <Adjustments>
      添加调整
      <AdjustRow $top={10}>
        {["sun", "levels", "curves", "exposure", "vibrance"].map((n) => <AdjustIcon key={n} name={n} />)}
      </AdjustRow>
      <AdjustRow>
        {["hue", "balance", "bw", "photo", "mixer", "lookup"].map((n) => <AdjustIcon key={n} name={n} />)}
      </AdjustRow>
      <AdjustRow>
        {["invert", "posterize", "threshold", "selective", "map"].map((n) => <AdjustIcon key={n} name={n} />)}
      </AdjustRow>
    </Adjustments>
  </>
);

const PercentBox = () => (
  <Percent>
    <span>100%</span>
    <div><svg width="6" height="4"><path d="M0 0h6L3 3.5z" fill="#fff" /></svg></div>
  </Percent>
);

const LayersPanel = () => (
  <>
    <PanelTabs>
      <PanelTab $active>图层</PanelTab>
      <PanelTab>通道</PanelTab>
      <PanelTab $w={41}>路径</PanelTab>
      <Spacer />
      <PanelMenu />
    </PanelTabs>
    <LayerRow $h={28}>
      <Select $w={70} $dim>
        <SmallIcon w={9}><circle cx="5.5" cy="6" r="3" strokeWidth="1.5" /><path d="M3.5 8.5.5 12" strokeWidth="1.5" /></SmallIcon>
        类型
        <UpDown color="#aaa" />
      </Select>
      <IconGroup $gap={10} $left={20}>
        <SmallIcon><path d="M.5 1.5h13v11H.5z" /><path d="M2 10.500 5 6.500l2 2 2-1 3 3zM10 4h1.500v1.500H10z" fill="#b9b9b9" stroke="none" /></SmallIcon>
        <SmallIcon><HalfCircle /></SmallIcon>
        <SmallIcon><text x="7" y="12" textAnchor="middle" fontFamily="Liberation Serif, serif" fontWeight="bold" fontSize="15" fill="#b9b9b9" stroke="none">T</text></SmallIcon>
        <SmallIcon><path d="M3 3h8v8H3zM1.5 1.5h2v2h-2zM10.5 1.5h2v2h-2zM1.5 10.5h2v2h-2zM10.5 10.5h2v2h-2z" /></SmallIcon>
        <SmallIcon><path d="M5.5 7V1.5h4L12.5 4v7.5H8M9.5 1.5V4h3" /><path d="M2 7h6v6H2z" fill="#b9b9b9" stroke="none" /></SmallIcon>
      </IconGroup>
      <FilterSwitch />
    </LayerRow>
    <LayerRow $h={28}>
      <Select $w={110} $dim>正常<UpDown color="#aaa" /></Select>
      <OptionLabel $left={8}>不透明度:</OptionLabel>
      <PercentBox />
    </LayerRow>
    <LayerRow $h={29} $line="#3a3a3a">
      <OptionLabel $left={2}>锁定:</OptionLabel>
      <IconGroup $gap={8} $left={9}>
        <SmallIcon><path d="M1.5 1.5h10v10h-10z" /><path d="M2 2h3v3H2zM8 2h3v3H8zM5 5h3v3H5zM2 8h3v3H2zM8 8h3v3H8z" fill="#b9b9b9" stroke="none" /></SmallIcon>
        <svg width="15" height="13" viewBox="10 4 20 16">{brushShape}</svg>
        <SmallIcon><path d="M7 1v12M1 7h12M5 3l2-2 2 2M5 11l2 2 2-2M3 5 1 7l2 2M11 5l2 2-2 2" /></SmallIcon>
        <SmallIcon><path d="M4.5 6V4a2.5 2.5 0 0 1 5 0v2" strokeWidth="1.5" /><path d="M2 6h10v7H2z" fill="#b9b9b9" stroke="none" /><path d="M7 8v3" stroke="#444" /></SmallIcon>
      </IconGroup>
      <OptionLabel $left={22}>填充:</OptionLabel>
      <PercentBox />
    </LayerRow>
    <Layers>
      <LayerList>
        <LayerItem>
          <EyeCell>
            <svg width="13" height="9" fill="none" stroke="#c4c4c4">
              <path d="M1 5c3-5 8-5 11 0-3 4-8 4-11 0z" />
              <circle cx="6.5" cy="4.5" r="2" fill="#c4c4c4" />
            </svg>
          </EyeCell>
          <OptionLabel $left={1} $right={7}>
            <svg width="36" height="20">
              <path d="M.5 6V.5H7M29 .5h6.5V6M.5 14v5.5H7M29 19.5h6.5V14" fill="none" stroke="#fff" />
              <path d="M2.5 2.5h31v15h-31z" fill="#fff" stroke="#222" />
              <path d="M4 6h29v3H4zM4 11h29v3H4z" fill="#2b8d12" />
              <path d="M4 7.500h29M4 12.500h29" stroke="#64b41d" />
              <path d="M3 4.500h3M3 9.500h3" stroke="#da70d6" />
            </svg>
          </OptionLabel>
          图层 0
        </LayerItem>
      </LayerList>
      <LayerScroll />
    </Layers>
    <LayerFooter>
      <SmallIcon><path d="M6 4.5H3a2.5 2.5 0 0 0 0 5h3M8 4.5h3a2.5 2.5 0 0 1 0 5H8M4.5 7h5" stroke="#888" /></SmallIcon>
      <SmallIcon w={16}>
        <text x="0" y="11" fontFamily="Liberation Serif, serif" fontStyle="italic" fontWeight="bold" fontSize="14" fill="#c4c4c4" stroke="none">fx</text>
        <path d="M13 11h3l-1.5 2z" fill="#ddd" stroke="none" />
      </SmallIcon>
      <SmallIcon><path d="M.5 2h13v10H.5z" fill="#c4c4c4" stroke="none" /><circle cx="7" cy="7" r="2.5" fill="#555" stroke="none" /></SmallIcon>
      <SmallIcon w={16}><HalfCircle /><path d="M13 11h3l-1.5 2z" fill="#ddd" stroke="none" /></SmallIcon>
      <SmallIcon><path d="M1 2h5l1 2h6v8H1z" fill="#b9b9b9" stroke="none" /></SmallIcon>
      <SmallIcon><path d="M2 2h10v10H8V6H2z" fill="#c4c4c4" stroke="none" /><path d="M2 7.5h5v4z" fill="#c4c4c4" stroke="none" /></SmallIcon>
      <SmallIcon><path d="M2 3.5h10M5 3V1.5h4V3M3.5 5v7.5h7V5M5.5 5v7M7 5v7M8.5 5v7" stroke="#888" /></SmallIcon>
    </LayerFooter>
  </>
);

const Value = ({ label, value, unit, radio, on, gap, right }) => (
  <ValueRow $gap={gap}>
    {radio && <Radio $on={on} />}
    <ValueLabel $w={right ? (radio ? 26 : 39) : 28} $right={!radio}>{label}:</ValueLabel>
    <ValueInput $w={right && radio ? 56 : 45}>{value}</ValueInput>
    {unit}
  </ValueRow>
);

const ColorPicker = () => (
  <Dialog>
    <DialogTitle>
      拾色器（前景色）
      <svg width="12" height="12"><path d="m1 1 10 10M11 1 1 11" stroke="#888" /></svg>
    </DialogTitle>
    <DialogBody>
      <FieldColumn>
        <ColorField><FieldCursor /></ColorField>
        <WebOnly><i />只有 Web 颜色</WebOnly>
      </FieldColumn>
      <HueColumn>
        <svg width="8" height="11"><path d="M.5 1.5h3l4 4-4 4h-3z" fill="#fff" stroke="#666" /></svg>
        <HueBar />
        <svg width="9" height="11"><path d="M8 1.5H5l-4 4 4 4h3z" fill="#fff" stroke="#666" /></svg>
      </HueColumn>
      <Values>
        <ValuesTop>
          <Preview>新的<div />当前</Preview>
          <Warnings>
            <svg width="13" height="12"><path d="M6.5 0 13 12H0z" fill="#444" /><path d="M6.5 4v4M6.5 9v1.5" stroke="#fff" strokeWidth="1.5" /></svg>
            <SmallSwatch $color="#b972a6" $gap={5} />
            <svg width="13" height="13" stroke="#444"><path d="m6.5.5 5.5 3v6l-5.5 3-5.5-3v-6z" fill="#bbb" /><path d="m1 3.5 5.5 3v6L1 9.5z" fill="#999" /><path d="m6.5 6.5 5.5-3" /></svg>
            <SmallSwatch $color="#cc66cc" />
          </Warnings>
          <Buttons>
            <DialogButton $primary $gap={10}>确定</DialogButton>
            <DialogButton>复位</DialogButton>
            <DialogButton>添加到色板</DialogButton>
            <DialogButton>颜色库</DialogButton>
          </Buttons>
        </ValuesTop>
        <ValueColumns>
          <ValueColumn $w={127}>
            <Value radio on label="H" value="302" unit="度" />
            <Value radio label="S" value="49" unit="%" />
            <Value radio label="B" value="85" unit="%" gap />
            <Value radio label="R" value="218" />
            <Value radio label="G" value="112" />
            <Value radio label="B" value="214" gap />
            <ValueRow><ValueLabel $w={17} $right>#</ValueLabel><ValueInput $w={110}>da70d6</ValueInput></ValueRow>
          </ValueColumn>
          <ValueColumn $w={101}>
            <Value right radio label="L" value="63" />
            <Value right radio label="a" value="52" />
            <Value right radio label="b" value="-34" gap />
            <Value right label="C" value="30" unit="%" />
            <Value right label="M" value="63" unit="%" />
            <Value right label="Y" value="0" unit="%" />
            <Value right label="K" value="0" unit="%" />
          </ValueColumn>
        </ValueColumns>
      </Values>
    </DialogBody>
  </Dialog>
);

const Gradients = styled.svg`
  position: absolute;
`;

export default function App() {
  return (
    <Window>
      <GlobalStyle />
      <Gradients width="0" height="0">
        <linearGradient id="toolGrad">
          <stop offset="0" stopColor="#444" />
          <stop offset="1" stopColor="#bbb" />
        </linearGradient>
        <radialGradient id="vibrance" cy="0.35">
          <stop offset="0" stopColor="#555" />
          <stop offset="1" stopColor="#b4b4b4" />
        </radialGradient>
      </Gradients>
      <TopBars />
      <Main>
        <Toolbar />
        <Center />
        <IconStrip>
          <CollapseBar><Chevrons left /></CollapseBar>
          <StripButton>
            <Grip />
            <svg width="16" height="18" fill="none" stroke={icon}>
              <path d="M1.5 1.5h4v4h-4zM1.5 7.5h4v4h-4z" />
              <path d="M1 13h5v5H1z" fill={icon} stroke="none" />
              <path d="M11 4c4 2 4.500 7 0 10.500" strokeWidth="2" />
              <path d="M9 2h6v2l-3 1v3L9 7z" fill={icon} stroke="none" />
            </svg>
          </StripButton>
        </IconStrip>
        <Panels>
          <CollapseBar><Chevrons /></CollapseBar>
          <InfoPanel />
          <PanelGap />
          <AdjustPanel />
          <PanelGap />
          <LayersPanel />
        </Panels>
      </Main>
      <ColorPicker />
      <Markup $x={-1} $y={212} $w={67} $h={46} />
      <Markup $x={-1} $y={625} $w={64} $h={63} />
      <Markup $x={788} $y={533} $w={154} $h={35} />
      <Arrows width="900" height="730">
        <path d="M145.5 172 88.3 214.3 85.7 210 79 227.5 96 224 92.5 219.5z" />
        <path d="m74 680 18-.7-2.5 4 47.5 31-52.5-21-2.7 0z" />
        <path d="M883.5 577.3 865 577.7l2.7 3.6-38 27.4 42.6-19.7 2 4z" />
      </Arrows>
      <Note $x={132} $y={132}>吸管工具</Note>
      <Note $x={154} $y={697}>左上角为前景色，点击颜色框</Note>
      <Note $x={722} $y={625}>吸取到的颜色</Note>
      <Watermark>@稀土掘金技术社区</Watermark>
    </Window>
  );
}
